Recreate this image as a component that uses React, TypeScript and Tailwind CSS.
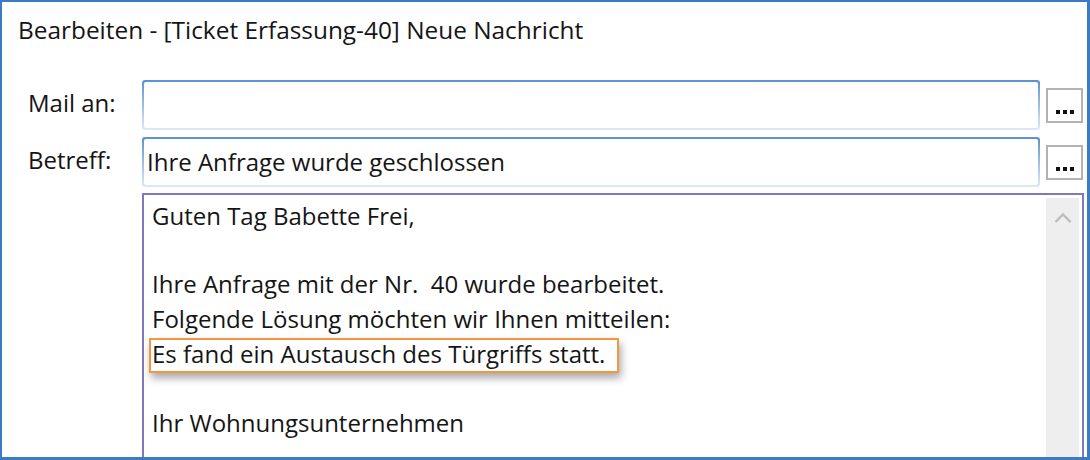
import React from "react";

function Dots() {
  return (
    <div className="ml-[6px] shrink-0 w-[37px] h-[35px] border-2 border-[#b2b2b2] bg-white flex items-end justify-center gap-[3px] pb-[7px]">
      <div className="w-[4px] h-[4px] bg-[#111]" />
      <div className="w-[4px] h-[4px] bg-[#111]" />
      <div className="w-[4px] h-[4px] bg-[#111]" />
    </div>
  );
}

function Field({ value }: { value?: string }) {
  return (
    <div className="shrink-0 w-[898px] h-[50px] rounded-[3px] p-[2px] bg-linear-to-b from-[#5a93cf] to-[#dce9f6]">
      <div className="w-full h-full bg-white rounded-[2px] flex items-center pl-[3px] leading-[34px]">
        {value}
      </div>
    </div>
  );
}

export default function App() {
  return (
    <div className="w-[1090px] h-[460px] bg-white border-t-2 border-l-2 border-r-[3px] border-b-[3px] border-[#3a7bc4] overflow-hidden font-['Open_Sans',sans-serif] text-[24px] text-[#151515] flex flex-col">
      <div className="shrink-0 h-[78px] pl-[16px] pt-[11px] leading-[34px] text-[24.4px]">
        Bearbeiten - [Ticket Erfassung-40] Neue Nachricht
      </div>
      <div className="shrink-0 flex flex-col pl-[26px] pr-[4px]">
        <div className="shrink-0 flex items-center h-[50px]">
          <div className="w-[114px] leading-[34px] pb-[4px]">Mail an:</div>
          <Field />
          <Dots />
        </div>
        <div className="shrink-0 flex items-center h-[50px] mt-[7px]">
          <div className="w-[114px] leading-[34px] pb-[4px]">Betreff:</div>
          <Field value="Ihre Anfrage wurde geschlossen" />
          <Dots />
        </div>
        <div className="shrink-0 ml-[114px] mt-[6px] w-[942px] h-[300px] border-2 border-[#8078bc] flex">
          <div className="flex-1 pl-[8px] pt-[4px] leading-[34.2px]">
            <div className="h-[34.2px]">Guten Tag Babette Frei,</div>
            <div className="h-[34.2px]" />
            <div className="h-[34.2px]">Ihre Anfrage mit der Nr.&nbsp; 40 wurde bearbeitet.</div>
            <div className="h-[34.2px]">Folgende Lösung möchten wir Ihnen mitteilen:</div>
            <div className="h-[34.2px]">
              <div className="w-fit -ml-[3px] mt-[2px] border-2 border-[#f29643] pl-[1px] pr-[12px] pb-[3.5px] leading-[27.5px] bg-white shadow-[2px_5px_8px_rgba(0,0,0,0.35)]">
                Es fand ein Austausch des Türgriffs statt.
              </div>
            </div>
            <div className="h-[34.2px]" />
            <div className="h-[34.2px]">Ihr Wohnungsunternehmen</div>
          </div>
          <div className="w-[33px] mt-[3px] mr-[3px] bg-[#eeeeee] flex justify-center pt-[14px]">
            <svg width="18" height="11" viewBox="0 0 18 11">
              <polyline points="1.5,10 9,2.5 16.5,10" fill="none" stroke="#bdbdbd" strokeWidth="2.4" />
            </svg>
          </div>
        </div>
      </div>
    </div>
  );
}
